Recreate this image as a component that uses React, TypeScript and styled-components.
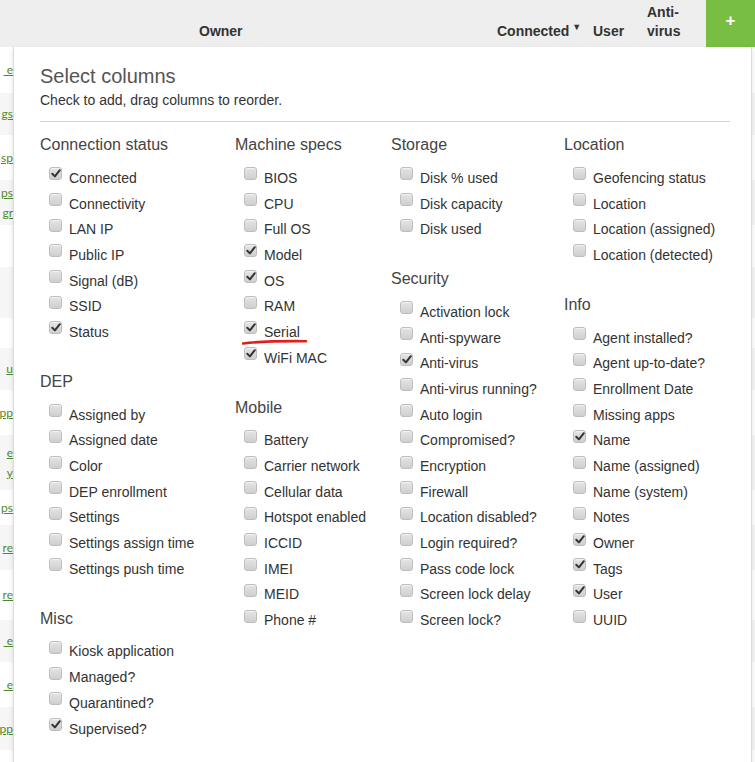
import React from "react";
import styled, { createGlobalStyle } from "styled-components";

const Global = createGlobalStyle`
  html, body { margin: 0; padding: 0; background: #fff; }
  body { font-family: "Liberation Sans", Arial, sans-serif; color: #333; }
  #root { width: 755px; height: 762px; overflow: hidden; }
`;

const Page = styled.div`
  position: relative;
  width: 755px;
  height: 762px;
  overflow: hidden;
  background: #fff;
`;

const Header = styled.div`
  display: flex;
  align-items: stretch;
  height: 47px;
  background: #eeeeee;
`;

const HeadCell = styled.div<{ $w: number }>`
  width: ${(p) => p.$w}px;
  flex: none;
  display: flex;
  align-items: flex-end;
  padding-bottom: 6px;
  box-sizing: border-box;
  font-size: 14px;
  font-weight: bold;
  line-height: 19px;
  color: #333;
`;

const SortArrow = styled.span`
  position: relative;
  top: -4px;
  font-size: 9px;
  line-height: 19px;
  margin-left: 3px;
`;

const AddButton = styled.div`
  flex: 1;
  background: #78be43;
  color: #fff;
  display: flex;
  justify-content: center;
  padding-top: 12px;
  box-sizing: border-box;
  font-size: 17px;
  font-weight: bold;
  line-height: 18px;
`;

const Table = styled.div`
  display: flex;
  flex-direction: column;
`;

const Row = styled.div<{ $h: number; $alt: boolean }>`
  height: ${(p) => p.$h}px;
  background: ${(p) => (p.$alt ? "#f6f6f6" : "#fff")};
  display: flex;
  flex-direction: column;
  justify-content: center;
  gap: 4px;
`;

const LinkCell = styled.div`
  width: 13px;
  display: flex;
  justify-content: flex-end;
  white-space: pre;
  font-family: Lato, "Liberation Sans", sans-serif;
  font-size: 12px;
  line-height: 16px;
  color: #4f8a2c;
  text-decoration: underline;
`;

const Panel = styled.div`
  position: absolute;
  left: 13px;
  top: 47px;
  width: 739px;
  height: 730px;
  box-sizing: border-box;
  background: #fff;
  border: 1px solid #dcdcdc;
  border-top: none;
  box-shadow: 0 2px 5px rgba(0, 0, 0, 0.12);
  padding: 17px 21px 0 26px;
`;

const Title = styled.div`
  font-size: 20px;
  line-height: 24px;
  color: #555;
  font-weight: 300;
`;

const Subtitle = styled.div`
  margin-top: 4px;
  font-size: 14px;
  line-height: 16px;
  color: #333;
`;

const Rule = styled.div`
  margin-top: 13px;
  height: 1px;
  background: #d4d4d4;
`;

const Grid = styled.div`
  margin-top: 13px;
  display: grid;
  grid-template-columns: 195px 156px 173px 1fr;
`;

const Column = styled.div`
  display: flex;
  flex-direction: column;
  gap: 27px;
`;

const Section = styled.div`
  display: flex;
  flex-direction: column;
`;

const Heading = styled.div`
  font-size: 16px;
  line-height: 20px;
  color: #444;
  margin-bottom: 10px;
`;

const Item = styled.label`
  position: relative;
  height: 25.7px;
  display: flex;
  align-items: center;
  padding-left: 9px;
  font-size: 14px;
  line-height: 16px;
  color: #333;
`;

const Box = styled.span<{ $checked: boolean }>`
  width: 13px;
  height: 13px;
  flex: none;
  box-sizing: border-box;
  margin: 0 7px 8px 0;
  border-radius: 3px;
  border: 1px solid #bdbdbd;
  background: linear-gradient(#e4e4e4, #cfcfcf);
  box-shadow: inset 0 1px 1px rgba(255, 255, 255, 0.6);
  display: flex;
  align-items: center;
  justify-content: center;
`;

const Scribble = styled.svg`
  position: absolute;
  left: 7px;
  top: 19px;
  pointer-events: none;
`;

type Sec = { title: string; items: [string, boolean][] };

const columns: Sec[][] = [
  [
    {
      title: "Connection status",
      items: [
        ["Connected", true],
        ["Connectivity", false],
        ["LAN IP", false],
        ["Public IP", false],
        ["Signal (dB)", false],
        ["SSID", false],
        ["Status", true],
      ],
    },
    {
      title: "DEP",
      items: [
        ["Assigned by", false],
        ["Assigned date", false],
        ["Color", false],
        ["DEP enrollment", false],
        ["Settings", false],
        ["Settings assign time", false],
        ["Settings push time", false],
      ],
    },
    {
      title: "Misc",
      items: [
        ["Kiosk application", false],
        ["Managed?", false],
        ["Quarantined?", false],
        ["Supervised?", true],
      ],
    },
  ],
  [
    {
      title: "Machine specs",
      items: [
        ["BIOS", false],
        ["CPU", false],
        ["Full OS", false],
        ["Model", true],
        ["OS", true],
        ["RAM", false],
        ["Serial", true],
        ["WiFi MAC", true],
      ],
    },
    {
      title: "Mobile",
      items: [
        ["Battery", false],
        ["Carrier network", false],
        ["Cellular data", false],
        ["Hotspot enabled", false],
        ["ICCID", false],
        ["IMEI", false],
        ["MEID", false],
        ["Phone #", false],
      ],
    },
  ],
  [
    {
      title: "Storage",
      items: [
        ["Disk % used", false],
        ["Disk capacity", false],
        ["Disk used", false],
      ],
    },
    {
      title: "Security",
      items: [
        ["Activation lock", false],
        ["Anti-spyware", false],
        ["Anti-virus", true],
        ["Anti-virus running?", false],
        ["Auto login", false],
        ["Compromised?", false],
        ["Encryption", false],
        ["Firewall", false],
        ["Location disabled?", false],
        ["Login required?", false],
        ["Pass code lock", false],
        ["Screen lock delay", false],
        ["Screen lock?", false],
      ],
    },
  ],
  [
    {
      title: "Location",
      items: [
        ["Geofencing status", false],
        ["Location", false],
        ["Location (assigned)", false],
        ["Location (detected)", false],
      ],
    },
    {
      title: "Info",
      items: [
        ["Agent installed?", false],
        ["Agent up-to-date?", false],
        ["Enrollment Date", false],
        ["Missing apps", false],
        ["Name", true],
        ["Name (assigned)", false],
        ["Name (system)", false],
        ["Notes", false],
        ["Owner", true],
        ["Tags", true],
        ["User", true],
        ["UUID", false],
      ],
    },
  ],
];

const rows: { h: number; links: string[] }[] = [
  { h: 46, links: [" e"] },
  { h: 42, links: ["gs"] },
  { h: 45, links: ["sp"] },
  { h: 45, links: ["ps", "gr"] },
  { h: 42, links: [] },
  { h: 51, links: [] },
  { h: 30, links: [] },
  { h: 42, links: ["u"] },
  { h: 45, links: ["pp"] },
  { h: 55, links: ["e", "y"] },
  { h: 35, links: ["ps"] },
  { h: 45, links: ["re"] },
  { h: 50, links: ["re"] },
  { h: 42, links: [" e"] },
  { h: 45, links: [" e"] },
  { h: 43, links: ["pp"] },
  { h: 40, links: [] },
];

const Check = () => (
  <svg width="10" height="9" viewBox="0 0 10 9">
    <path d="M1.3 4.8 L3.9 7.4 L8.8 1.2" fill="none" stroke="#333" strokeWidth="2" strokeLinecap="round" strokeLinejoin="round" />
  </svg>
);

export default function App() {
  return (
    <Page>
      <Global />
      <Header>
        <HeadCell $w={199} />
        <HeadCell $w={298}>Owner</HeadCell>
        <HeadCell $w={96}>
          Connected<SortArrow>▼</SortArrow>
        </HeadCell>
        <HeadCell $w={54}>User</HeadCell>
        <HeadCell $w={59}>
          Anti-
          <br />
          virus
        </HeadCell>
        <AddButton>+</AddButton>
      </Header>
      <Table>
        {rows.map((r, i) => (
          <Row key={i} $h={r.h} $alt={i % 2 === 1}>
            {r.links.map((l, j) => (
              <LinkCell key={j}>{l}</LinkCell>
            ))}
          </Row>
        ))}
      </Table>
      <Panel>
        <Title>Select columns</Title>
        <Subtitle>Check to add, drag columns to reorder.</Subtitle>
        <Rule />
        <Grid>
          {columns.map((col, ci) => (
            <Column key={ci}>
              {col.map((sec) => (
                <Section key={sec.title}>
                  <Heading>{sec.title}</Heading>
                  {sec.items.map(([name, checked]) => (
                    <Item key={name}>
                      <Box $checked={checked}>{checked && <Check />}</Box>
                      {name}
                      {name === "Serial" && (
                        <Scribble width="66" height="8" viewBox="0 0 66 8">
                          <path d="M1 5.5 C 15 3.5, 35 3, 64 3.2" fill="none" stroke="#e0201a" strokeWidth="2.6" strokeLinecap="round" />
                        </Scribble>
                      )}
                    </Item>
                  ))}
                </Section>
              ))}
            </Column>
          ))}
        </Grid>
      </Panel>
    </Page>
  );
}
